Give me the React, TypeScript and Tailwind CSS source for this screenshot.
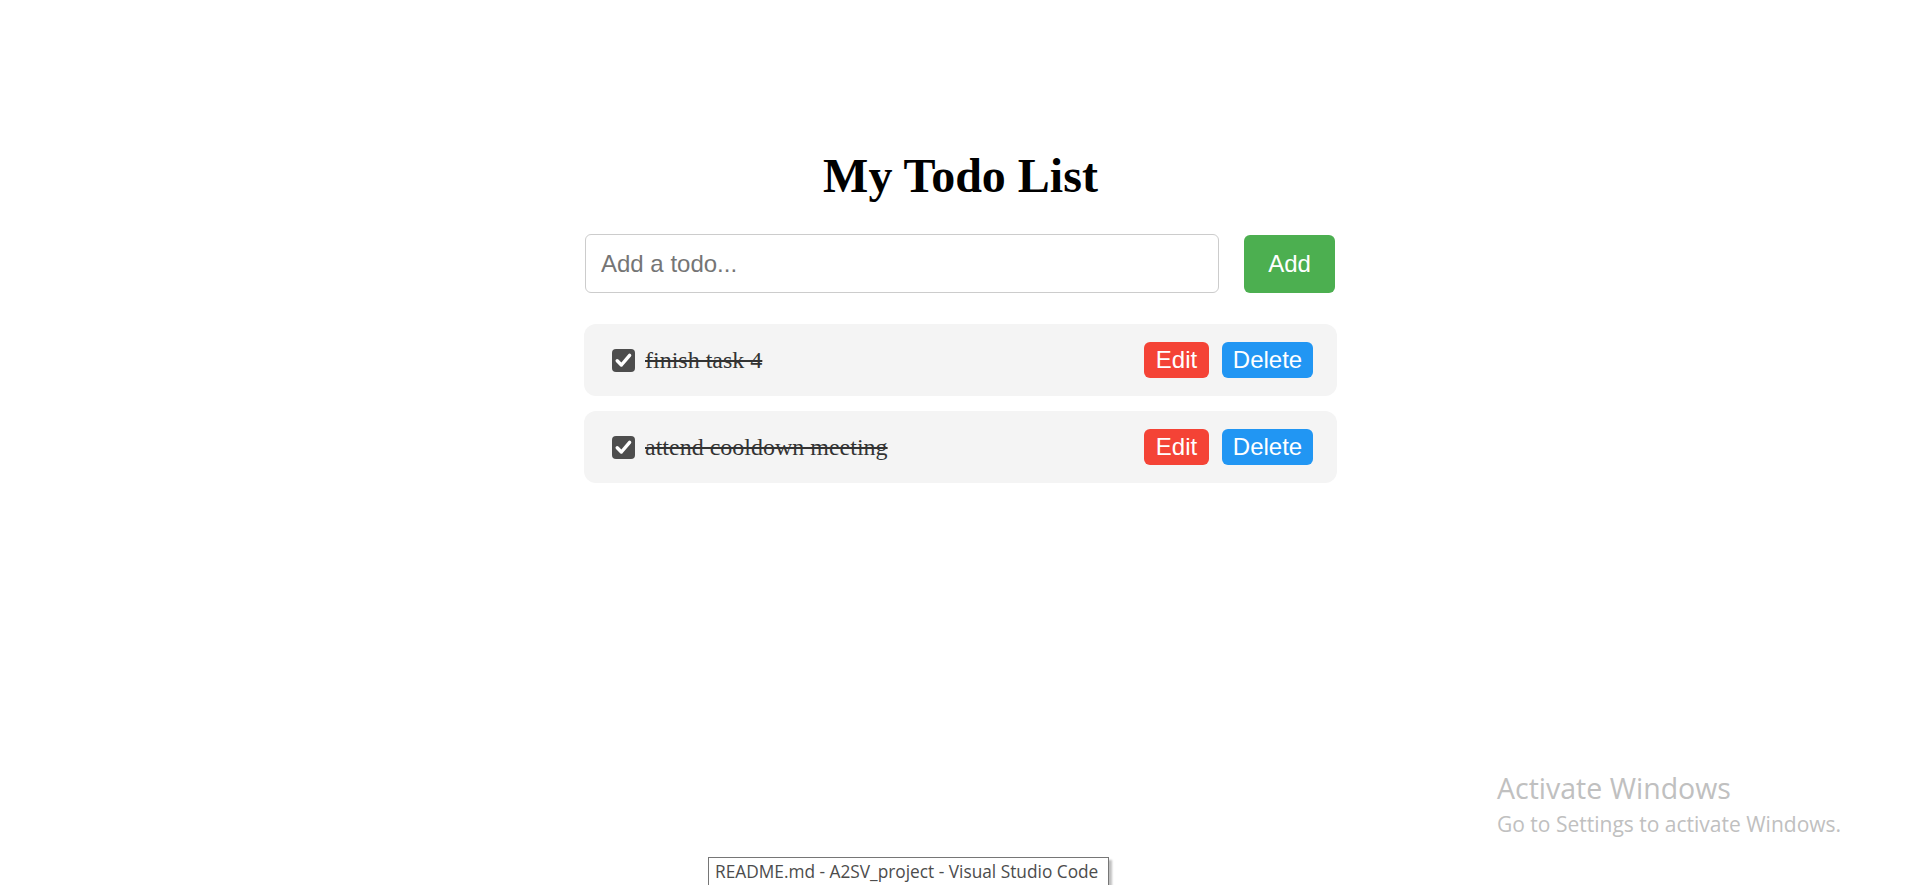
import { useState } from 'react';

type Todo = {
  id: number;
  text: string;
  done: boolean;
};

const initialTodos: Todo[] = [
  { id: 1, text: 'finish task 4', done: true },
  { id: 2, text: 'attend cooldown meeting', done: true },
];

const CheckBox = ({ checked, onToggle }: { checked: boolean; onToggle: () => void }) => (
  <button
    type="button"
    onClick={onToggle}
    className={`flex h-[23px] w-[23px] shrink-0 items-center justify-center rounded-[4px] ${
      checked ? 'bg-[#4d4d4d]' : 'border border-[#767676] bg-white'
    }`}
  >
    {checked && (
      <svg className="h-[23px] w-[23px]" viewBox="0 0 23 23" fill="none">
        <path d="M5.2 11.8 L9.4 16 L17.6 6.4" stroke="#ffffff" strokeWidth={3.4} strokeLinecap="round" strokeLinejoin="round" />
      </svg>
    )}
  </button>
);

export default function App() {
  const [todos, setTodos] = useState<Todo[]>(initialTodos);
  const [input, setInput] = useState('');

  const addTodo = () => {
    if (!input.trim()) return;
    setTodos([...todos, { id: Date.now(), text: input.trim(), done: false }]);
    setInput('');
  };

  const toggle = (id: number) =>
    setTodos(todos.map((t) => (t.id === id ? { ...t, done: !t.done } : t)));

  const remove = (id: number) => setTodos(todos.filter((t) => t.id !== id));

  return (
    <div className="relative min-h-screen overflow-hidden bg-white font-['Liberation_Serif',serif]">
      <div className="ml-[584px] w-[753px] pt-[148px]">
        <h1 className="text-center text-[48px] font-bold leading-[56px] text-black">My Todo List</h1>

        {/* Input row */}
        <div className="mt-[30px] flex items-center justify-between pl-px pr-[2px]">
          <input
            value={input}
            onChange={(e) => setInput(e.target.value)}
            placeholder="Add a todo..."
            className="h-[59px] w-[634px] rounded-[6px] border border-[#cccccc] px-[15px] font-['Liberation_Sans',Arial,sans-serif] text-[24px] text-black outline-none placeholder:text-[#757575]"
          />
          <button
            type="button"
            onClick={addTodo}
            className="h-[58px] w-[91px] rounded-[6px] bg-[#4caf50] font-['Liberation_Sans',Arial,sans-serif] text-[24px] text-white"
          >
            Add
          </button>
        </div>

        {/* Todo items */}
        <ul className="mt-[31px] flex flex-col gap-[15px]">
          {todos.map((todo) => (
            <li key={todo.id} className="flex h-[72px] items-center rounded-[12px] bg-[#f4f4f4] pl-[28px] pr-[24px]">
              <CheckBox checked={todo.done} onToggle={() => toggle(todo.id)} />
              <span className={`ml-[10px] text-[24px] text-[#333333] ${todo.done ? 'line-through' : ''}`}>
                {todo.text}
              </span>
              <div className="ml-auto flex items-center gap-[13px] font-['Liberation_Sans',Arial,sans-serif]">
                <button type="button" className="h-[36px] w-[65px] rounded-[6px] bg-[#f44336] text-[24px] text-white">
                  Edit
                </button>
                <button
                  type="button"
                  onClick={() => remove(todo.id)}
                  className="h-[36px] w-[91px] rounded-[6px] bg-[#2196f3] text-[24px] text-white"
                >
                  Delete
                </button>
              </div>
            </li>
          ))}
        </ul>
      </div>

      {/* Windows watermark */}
      <div className="pointer-events-none absolute left-[1497px] top-[770px] font-['Open_Sans',sans-serif] text-[#c0c0c0]">
        <div className="text-[28.5px] leading-[36px]">Activate Windows</div>
        <div className="mt-[4px] text-[21px] leading-[28px]">Go to Settings to activate Windows.</div>
      </div>

      {/* Taskbar tooltip */}
      <div className="pointer-events-none absolute left-[708px] top-[857px] h-[40px] w-[401px] whitespace-nowrap border border-[#767676] bg-white pl-[6px] pt-[2px] font-['Open_Sans',sans-serif] text-[17.3px] leading-[24px] text-[#4c4c4c] shadow-[3px_3px_2px_rgba(0,0,0,0.25)]">
        README.md - A2SV_project - Visual Studio Code
      </div>
    </div>
  );
}
